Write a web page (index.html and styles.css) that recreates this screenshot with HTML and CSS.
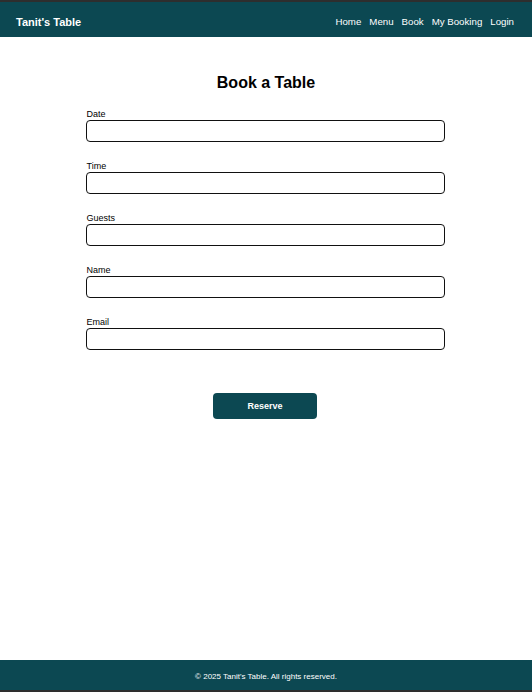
FILE: index.html
```html
<!DOCTYPE html>
<html lang="en">
<head>
<meta charset="utf-8">
<title>Tanit's Table - Book</title>
<link rel="stylesheet" href="styles.css">
</head>
<body>
<div class="page">
  <header class="topbar">
    <div class="brand">Tanit's Table</div>
    <nav class="nav">
      <a href="#">Home</a>
      <a href="#">Menu</a>
      <a href="#">Book</a>
      <a href="#">My Booking</a>
      <a href="#">Login</a>
    </nav>
  </header>
  <main class="main">
    <h1 class="title">Book a Table</h1>
    <form class="form">
      <div class="field">
        <label>Date</label>
        <input class="input" type="text">
      </div>
      <div class="field">
        <label>Time</label>
        <input class="input" type="text">
      </div>
      <div class="field">
        <label>Guests</label>
        <input class="input" type="text">
      </div>
      <div class="field">
        <label>Name</label>
        <input class="input" type="text">
      </div>
      <div class="field">
        <label>Email</label>
        <input class="input" type="text">
      </div>
      <div class="actions">
        <button class="btn" type="button">Reserve</button>
      </div>
    </form>
  </main>
  <footer class="footer">© 2025 Tanit's Table. All rights reserved.</footer>
</div>
</body>
</html>
```
FILE: styles.css
```css
html, body {
  margin: 0;
  padding: 0;
  height: 100%;
}
body {
  background: #2e2e2e;
  font-family: "Liberation Sans", Arial, sans-serif;
  color: #000;
}
.page {
  box-sizing: border-box;
  height: 688px;
  margin-top: 2px;
  background: #fff;
  display: flex;
  flex-direction: column;
}
.topbar {
  box-sizing: border-box;
  height: 35px;
  background: #0c4852;
  display: flex;
  align-items: center;
  justify-content: space-between;
  padding: 4px 18px 0 16px;
  flex-shrink: 0;
}
.brand {
  color: #fff;
  font-weight: bold;
  font-size: 11px;
}
.nav {
  display: flex;
  gap: 8px;
}
.nav a {
  color: #fff;
  text-decoration: none;
  font-size: 9.7px;
}
.main {
  flex: 1;
  padding-top: 36px;
}
.title {
  margin: 0 0 16px;
  text-align: center;
  font-size: 16px;
  line-height: 19px;
  font-weight: bold;
}
.form {
  width: 359px;
  margin: 0 auto;
  padding-right: 2px;
}
.field {
  margin-bottom: 18px;
}
.field label {
  display: block;
  font-size: 9px;
  line-height: 11px;
  padding: 1px 0 0 1px;
  margin-bottom: 0;
}
.input {
  display: block;
  box-sizing: border-box;
  width: 100%;
  height: 22px;
  border: 1px solid #111;
  border-radius: 4px;
  background: #fff;
  margin: 0;
}
.actions {
  display: flex;
  justify-content: center;
  padding-top: 25px;
}
.btn {
  width: 104px;
  height: 26px;
  border: none;
  border-radius: 4px;
  background: #0c4852;
  color: #fff;
  font-family: "Liberation Sans", Arial, sans-serif;
  font-weight: bold;
  font-size: 9px;
}
.footer {
  box-sizing: border-box;
  height: 30px;
  flex-shrink: 0;
  background: #0c4852;
  color: #fff;
  font-size: 8px;
  display: flex;
  align-items: center;
  justify-content: center;
  padding-top: 3px;
}
```
